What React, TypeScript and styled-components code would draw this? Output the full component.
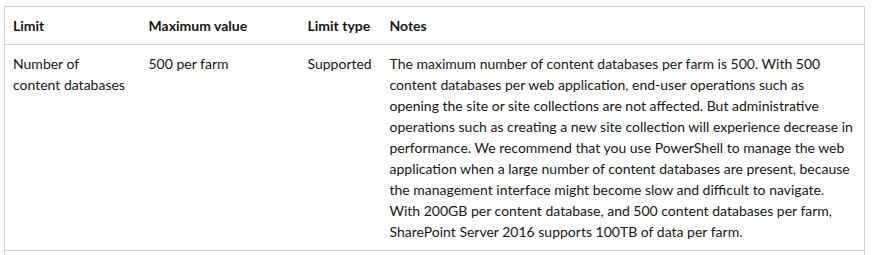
import React from "react";
import styled, { createGlobalStyle } from "styled-components";

const GlobalStyle = createGlobalStyle`
  html, body {
    margin: 0;
    padding: 0;
    background: #ffffff;
    overflow: hidden;
  }
  body {
    font-family: Lato, "Segoe UI", "Liberation Sans", sans-serif;
    color: #171717;
  }
`;

const Page = styled.div`
  padding: 6px 0 0 4px;
`;

const Table = styled.table`
  width: 860px;
  border-collapse: collapse;
  table-layout: fixed;
  border: 1px solid #d1d1d1;
  font-size: 14px;
  line-height: 21px;
`;

const HeadCell = styled.th<{ $w: number }>`
  box-sizing: border-box;
  width: ${(p) => p.$w}px;
  padding: 8px;
  text-align: left;
  font-weight: 700;
  vertical-align: top;
  border-bottom: 1px solid #d1d1d1;
`;

const Row = styled.tr`
  border-bottom: 1px solid #d1d1d1;
`;

const Cell = styled.td<{ $padRight?: number }>`
  box-sizing: border-box;
  padding: 8px ${(p) => p.$padRight ?? 8}px 8px 8px;
  height: 37px;
  vertical-align: top;
  font-weight: 400;
`;

const columns = [
  { label: "Limit", w: 136 },
  { label: "Maximum value", w: 159 },
  { label: "Limit type", w: 82 },
  { label: "Notes", w: 483 },
];

const rows = [
  {
    limit: "Number of content databases",
    max: "500 per farm",
    type: "Supported",
    notes:
      "The maximum number of content databases per farm is 500. With 500 content databases per web application, end-user operations such as opening the site or site collections are not affected. But administrative operations such as creating a new site collection will experience decrease in performance. We recommend that you use PowerShell to manage the web application when a large number of content databases are present, because the management interface might become slow and difficult to navigate. With 200GB per content database, and 500 content databases per farm, SharePoint Server 2016 supports 100TB of data per farm.",
  },
];

export default function App() {
  return (
    <>
      <GlobalStyle />
      <Page>
        <Table>
          <thead>
            <tr>
              {columns.map((c) => (
                <HeadCell key={c.label} $w={c.w}>
                  {c.label}
                </HeadCell>
              ))}
            </tr>
          </thead>
          <tbody>
            {rows.map((r) => (
              <Row key={r.limit}>
                <Cell $padRight={14}>{r.limit}</Cell>
                <Cell>{r.max}</Cell>
                <Cell>{r.type}</Cell>
                <Cell>{r.notes}</Cell>
              </Row>
            ))}
            <Row>
              <Cell />
              <Cell />
              <Cell />
              <Cell />
            </Row>
          </tbody>
        </Table>
      </Page>
    </>
  );
}
